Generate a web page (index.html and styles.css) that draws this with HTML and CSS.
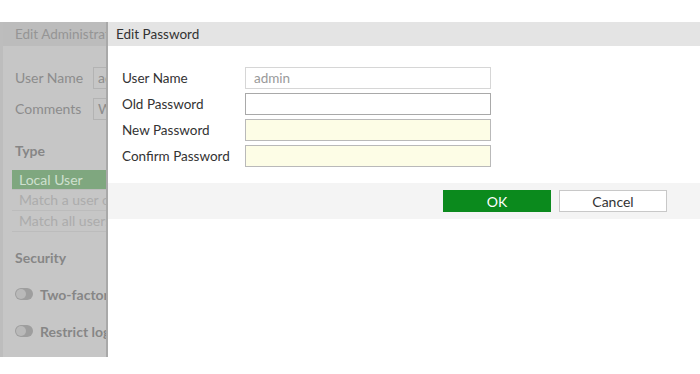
FILE: index.html
```html
<!DOCTYPE html>
<html lang="en">
<head>
    <meta charset="UTF-8">
    <title>Edit Password</title>
    <link rel="stylesheet" href="styles.css">
</head>
<body>
    <div class="screen">
        <div class="backdrop">
            <div class="backdrop-header">Edit Administrator</div>
            <div class="backdrop-body">
                <div class="bd-row">
                    <span class="bd-label">User Name</span>
                    <span class="bd-input">admin</span>
                </div>
                <div class="bd-row">
                    <span class="bd-label">Comments</span>
                    <span class="bd-input">Write a comment...</span>
                </div>
                <div class="bd-section">Type</div>
                <div class="bd-options">
                    <div class="bd-option selected">Local User</div>
                    <div class="bd-option">Match a user on a remote server group</div>
                    <div class="bd-option">Match all users in a remote server group</div>
                </div>
                <div class="bd-section security">Security</div>
                <div class="bd-toggle"><span class="switch"></span>Two-factor Authentication</div>
                <div class="bd-toggle"><span class="switch"></span>Restrict login to trusted hosts</div>
            </div>
        </div>

        <div class="dialog">
            <div class="dialog-header">Edit Password</div>
            <div class="dialog-form">
                <div class="form-row">
                    <label class="form-label">User Name</label>
                    <div class="form-input readonly">admin</div>
                </div>
                <div class="form-row">
                    <label class="form-label">Old Password</label>
                    <div class="form-input"></div>
                </div>
                <div class="form-row">
                    <label class="form-label">New Password</label>
                    <div class="form-input required"></div>
                </div>
                <div class="form-row">
                    <label class="form-label">Confirm Password</label>
                    <div class="form-input required"></div>
                </div>
            </div>
            <div class="dialog-footer">
                <button class="btn btn-ok">OK</button>
                <button class="btn btn-cancel">Cancel</button>
            </div>
        </div>
    </div>
</body>
</html>
```

FILE: styles.css
```css
* {
    margin: 0;
    padding: 0;
    box-sizing: border-box;
}

body {
    font-family: 'Lato', 'Open Sans', sans-serif;
    font-size: 13.5px;
    background: #ffffff;
    color: #333333;
    width: 700px;
    height: 374px;
    overflow: hidden;
}

.screen {
    margin-top: 22px;
    height: 335px;
    display: flex;
}

/* dimmed page behind the dialog */
.backdrop {
    width: 108px;
    flex-shrink: 0;
    background: #c6c6c6;
    border-left: 3px solid #bdbdbd;
    border-right: 2px solid #a9a9a9;
    overflow: hidden;
    white-space: nowrap;
    color: #8c8c8c;
}

.backdrop-header {
    height: 24px;
    line-height: 25px;
    padding-left: 12px;
    background: #bcbcbc;
    color: #959595;
}

.backdrop-body {
    padding: 19px 0 0 12px;
    font-size: 14px;
}

.bd-row {
    display: flex;
    align-items: center;
    gap: 10px;
    height: 25px;
    margin-bottom: 6px;
}

.bd-label {
    width: 68px;
    flex-shrink: 0;
}

.bd-input {
    flex-shrink: 0;
    border: 1px solid #b3b3b3;
    height: 22px;
    line-height: 20px;
    padding-left: 4px;
    width: 200px;
}

.bd-section {
    font-weight: 700;
    margin: 21px 0 11px;
    color: #868686;
}

.bd-section.security {
    margin: 17px 0 19px;
}

.bd-options {
    margin-left: -3px;
}

.bd-option {
    height: 21px;
    line-height: 20px;
    padding-left: 7px;
    border-bottom: 1px solid #bcbcbc;
    color: #acacac;
}

.bd-option.selected {
    background: #7fa77f;
    color: #cfe0cf;
    height: 20px;
}

.bd-toggle {
    display: flex;
    align-items: center;
    gap: 7px;
    height: 18px;
    margin-bottom: 19px;
    font-weight: 700;
    color: #868686;
}

.switch {
    flex-shrink: 0;
    width: 18px;
    height: 12px;
    border-radius: 6px;
    background: #9e9e9e;
    position: relative;
}

.switch::after {
    content: '';
    position: absolute;
    left: 1px;
    top: 1px;
    width: 10px;
    height: 10px;
    border-radius: 50%;
    background: #b9b9b9;
}

/* dialog */
.dialog {
    flex: 1;
    background: #ffffff;
    display: flex;
    flex-direction: column;
}

.dialog-header {
    height: 24px;
    line-height: 25px;
    padding-left: 8px;
    background: #e4e4e4;
    color: #333333;
}

.dialog-form {
    padding: 21px 0 16px 14px;
    display: flex;
    flex-direction: column;
    gap: 4px;
}

.form-row {
    display: flex;
    align-items: center;
    height: 22px;
}

.form-label {
    width: 123px;
    flex-shrink: 0;
    color: #333333;
}

.form-input {
    width: 246px;
    height: 22px;
    line-height: 20px;
    padding-left: 8px;
    border: 1px solid #a9a9a9;
    background: #ffffff;
}

.form-input.readonly {
    border-color: #d6d6d6;
    color: #9a9a9a;
}

.form-input.required {
    background: #fdfde6;
    border-color: #b9b9b9;
}

.dialog-footer {
    height: 36px;
    background: #f4f4f4;
    display: flex;
    justify-content: flex-end;
    align-items: center;
    gap: 8px;
    padding-right: 33px;
}

.btn {
    width: 108px;
    height: 22px;
    font-family: inherit;
    font-size: 14px;
    border: 1px solid #c8c8c8;
}

.btn-ok {
    background: #0b8a1d;
    border-color: #0b8a1d;
    color: #ffffff;
}

.btn-cancel {
    background: #ffffff;
    color: #333333;
}
```
